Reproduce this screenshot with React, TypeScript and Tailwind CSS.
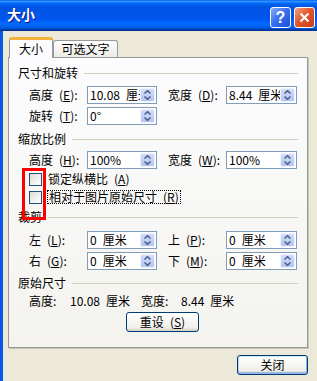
import React from 'react';

// 微软 XP 风格的“大小”对话框
function Spin() {
  return (
    <div className="w-[15px] h-[14px] mr-[1px] shrink-0 rounded-[2px] border border-[#eef3ff] bg-[linear-gradient(180deg,#d3ddfb,#b3c5f3)] flex flex-col items-center justify-center gap-[2px]">
      <svg width="7" height="4" viewBox="0 0 7 4">
        <path d="M0.5 3.5 L3.5 0.6 L6.5 3.5" stroke="#4d6185" strokeWidth="1.5" fill="none" />
      </svg>
      <svg width="7" height="4" viewBox="0 0 7 4">
        <path d="M0.5 0.5 L3.5 3.4 L6.5 0.5" stroke="#4d6185" strokeWidth="1.5" fill="none" />
      </svg>
    </div>
  );
}

function Field({ value, className }: { value: string; className: string }) {
  return (
    <div className={`h-[18px] border border-[#7f9db9] bg-white flex items-center shrink-0 ${className}`}>
      <span className="flex-1 overflow-hidden whitespace-pre pl-[2px] text-[12px] leading-none">{value}</span>
      <Spin />
    </div>
  );
}

function Group({ title, className }: { title: string; className: string }) {
  return (
    <div className={`h-[16px] flex items-center pl-[9px] pr-[9px] ${className}`}>
      <span className="text-[12px] leading-none">{title}</span>
      <div className="flex-1 h-px bg-[#d0d0bf] ml-[6px]" />
    </div>
  );
}

function Label({ text, k, className }: { text: string; k: string; className: string }) {
  return (
    <span className={`text-[12px] leading-none whitespace-pre shrink-0 ${className}`}>
      {text}{'\u2002'}(<u>{k}</u>):
    </span>
  );
}

function Checkbox() {
  return <div className="w-[13px] h-[13px] shrink-0 border border-[#1c5180] bg-[linear-gradient(135deg,#dcdcd7,#ffffff)]" />;
}

export default function App() {
  return (
    <div className="w-[317px] h-[381px] overflow-hidden bg-[#ece9d8] relative flex flex-col font-['Noto_Sans_CJK_SC',sans-serif] text-black">
      {/* 标题栏 */}
      <div className="h-[31px] shrink-0 flex items-start justify-between bg-[linear-gradient(180deg,#0058ee_0%,#3593ff_4%,#288eff_6%,#127dff_8%,#036ffc_10%,#0262ee_14%,#0057e5_20%,#0054e3_24%,#0055eb_56%,#005bf5_66%,#026afe_76%,#0062ef_86%,#0052d6_92%,#0040ab_94%,#003092_100%)]">
        <span className="pl-[7px] pt-[7px] text-[14px] font-bold text-white leading-none [text-shadow:1px_1px_0_#0f1089]">大小</span>
        <div className="flex gap-[3px] pt-[7px] pr-[2px]">
          <div className="w-[21px] h-[21px] rounded-[3px] border border-white bg-[linear-gradient(135deg,#89aefa,#3a6ff0_45%,#1c50d8)] flex items-center justify-center">
            <span className="text-[16px] font-bold text-white leading-none font-['Liberation_Sans',sans-serif]">?</span>
          </div>
          <div className="w-[21px] h-[21px] rounded-[3px] border border-white bg-[linear-gradient(135deg,#f2a286,#e2572c_45%,#c93c18)] flex items-center justify-center">
            <svg width="11" height="11" viewBox="0 0 11 11">
              <path d="M1.5 1.5 L9.5 9.5 M9.5 1.5 L1.5 9.5" stroke="white" strokeWidth="2.2" />
            </svg>
          </div>
        </div>
      </div>

      {/* 主体 */}
      <div className="flex-1 border-l-[3px] border-[#0a57e6] pl-[5px] flex flex-col">
        <div className="mt-[6px] h-[21px] pl-[1px] flex items-end relative z-10 -mb-px">
          <div className="w-[44px] h-[21px] border-x border-[#919b9c] border-t-[3px] border-t-[#f4b23c] rounded-t-[3px] bg-[#fcfcfe] flex items-center justify-center text-[12px] leading-none pb-[1px]">
            大小
          </div>
          <div className="w-[65px] h-[17px] mb-px border-t border-x border-[#919b9c] rounded-t-[3px] bg-[linear-gradient(180deg,#ffffff,#ecebe6)] flex items-center justify-center text-[12px] leading-none">
            可选文字
          </div>
        </div>

        <div className="w-[300px] h-[291px] border border-[#919b9c] shadow-[1px_1px_0_#c8c5b5] bg-[linear-gradient(180deg,#fcfcfe,#f4f3ee)] flex flex-col">
          <Group title="尺寸和旋转" className="mt-[7px]" />
          <div className="mt-[5px] flex items-center pl-[20px]">
            <Label text="高度" k="E" className="w-[58px]" />
            <Field value={'10.08\u2002厘米'} className="w-[70px]" />
            <Label text="宽度" k="D" className="w-[58px] ml-[11px]" />
            <Field value={'8.44\u2002厘米'} className="w-[71px]" />
          </div>
          <div className="mt-[3px] flex items-center pl-[20px]">
            <Label text="旋转" k="T" className="w-[58px]" />
            <Field value="0°" className="w-[70px]" />
          </div>

          <Group title="缩放比例" className="mt-[6px]" />
          <div className="mt-[4px] flex items-center pl-[20px]">
            <Label text="高度" k="H" className="w-[58px]" />
            <Field value="100%" className="w-[70px]" />
            <Label text="宽度" k="W" className="w-[58px] ml-[11px]" />
            <Field value="100%" className="w-[71px]" />
          </div>
          <div className="mt-[3px] h-[14px] flex items-center pl-[20px]">
            <Checkbox />
            <span className="ml-[6px] text-[12px] leading-none whitespace-pre">锁定纵横比{'\u2002'}(<u>A</u>)</span>
          </div>
          <div className="mt-[4px] h-[14px] flex items-center pl-[20px]">
            <Checkbox />
            <span className="ml-[5px] px-[1px] h-[14px] flex items-center border border-dotted border-black text-[12px] leading-none whitespace-pre">
              相对于图片原始尺寸{'\u2002'}(<u>R</u>)
            </span>
          </div>

          <Group title="裁剪" className="mt-[5px]" />
          <div className="mt-[6px] flex items-center pl-[20px]">
            <Label text="左" k="L" className="w-[58px]" />
            <Field value={'0\u2002厘米'} className="w-[70px]" />
            <Label text="上" k="P" className="w-[58px] ml-[11px]" />
            <Field value={'0\u2002厘米'} className="w-[71px]" />
          </div>
          <div className="mt-[3px] flex items-center pl-[20px]">
            <Label text="右" k="G" className="w-[58px]" />
            <Field value={'0\u2002厘米'} className="w-[70px]" />
            <Label text="下" k="M" className="w-[58px] ml-[11px]" />
            <Field value={'0\u2002厘米'} className="w-[71px]" />
          </div>

          <Group title="原始尺寸" className="mt-[5px]" />
          <div className="mt-[3px] h-[14px] flex items-center pl-[20px] text-[12px] leading-none whitespace-pre">
            <span className="w-[41px]">高度:</span>
            <span className="w-[71px]">{'10.08\u2002厘米'}</span>
            <span className="w-[40px]">宽度:</span>
            <span>{'8.44\u2002厘米'}</span>
          </div>
          <div className="mt-[4px] ml-[117px] w-[73px] h-[20px] rounded-[3px] border border-[#003c74] bg-[linear-gradient(180deg,#ffffff,#f0efea_80%,#d6d0c5)] flex items-center justify-center text-[12px] leading-none whitespace-pre">
            重设{'\u2002'}(<u>S</u>)
          </div>
        </div>

        <div className="mt-[7px] flex justify-end pr-[9px]">
          <div className="w-[71px] h-[20px] rounded-[3px] border border-[#003c74] bg-[linear-gradient(180deg,#ffffff,#f0efea_80%,#d6d0c5)] shadow-[inset_0_-2px_0_#98b8ea,inset_0_1px_0_#cee7ff,inset_1px_0_0_#bcd4f6,inset_-1px_0_0_#89ade4] flex items-center justify-center text-[12px] leading-none">
            关闭
          </div>
        </div>
      </div>

      {/* 红色标注框 */}
      <div className="absolute left-[22px] top-[168px] w-[24px] h-[52px] border-[3px] border-[#ff0000]" />
    </div>
  );
}
